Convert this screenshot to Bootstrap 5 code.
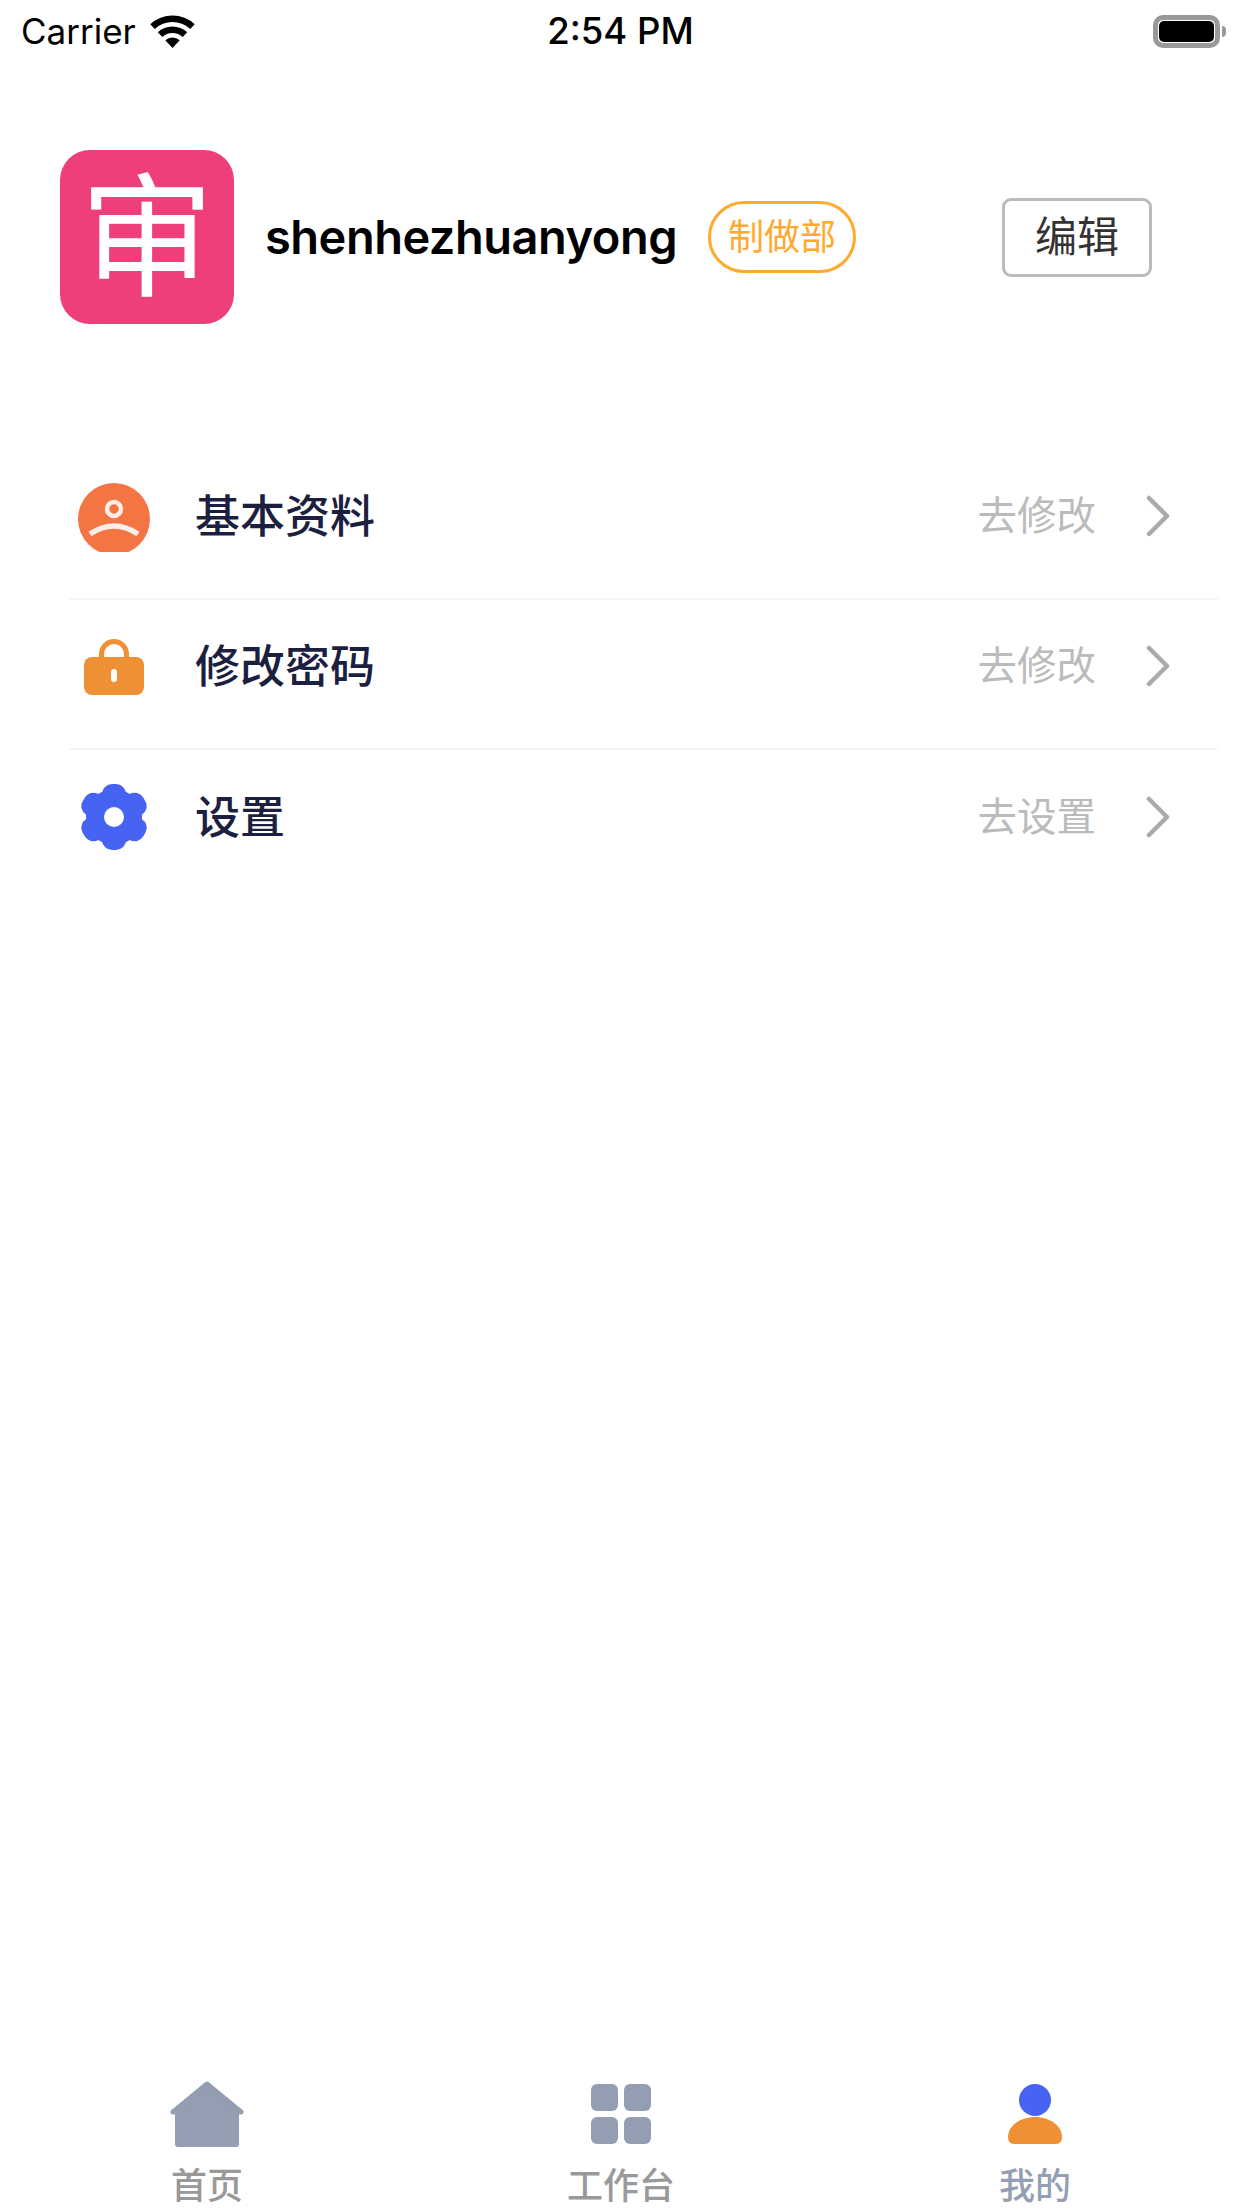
<!DOCTYPE html>
<html lang="zh-CN">
<head>
  <meta charset="UTF-8">
  <title>我的</title>
  <meta name="viewport" content="width=device-width, initial-scale=1">
  <link href="https://cdn.jsdelivr.net/npm/bootstrap@5.3.0/dist/css/bootstrap.min.css" rel="stylesheet">
  <style>
    body {
      background: #fff;
      font-family: Inter, "Noto Sans CJK SC", sans-serif;
      height: 100vh;
    }
    .status-bar { height: 62px; padding: 0 16px 0 21px; font-size: 35px; color: #000; }
    .status-time { font-weight: 500; font-size: 36.5px; margin-right: 6px; }
    .status-side { width: 306px; }
    .wifi-icon { margin-left: 14px; }
    .battery { width: 67px; height: 33px; border: 5px solid #999; border-radius: 10px; padding: 1px; }
    .battery-fill { background: #000; border-radius: 5px; height: 100%; }
    .battery-nub { width: 4px; height: 11px; background: #999; border-radius: 0 4px 4px 0; margin-left: 2px; }

    .profile { margin-top: 88px; padding: 0 90px 0 60px; }
    .avatar { width: 174px; height: 174px; border-radius: 30px; background: #ef3f7b; color: #fff; font-size: 134px; line-height: 1; font-weight: 400; }
    .user-name { font-size: 47px; font-weight: 600; color: #000; margin-left: 31px; letter-spacing: -.5px; }
    .dept-tag { width: 148px; height: 72px; margin-left: 31px; border: 3px solid #ffa92e; border-radius: 36px; color: #ffa92e; font-size: 36px; }
    .edit-btn { width: 150px; height: 79px; padding: 0; border: 3px solid #bbb; border-radius: 9px; color: #333; font-size: 42px; line-height: 1; }

    .menu-list { margin: 126px 24px 0 69px; --bs-list-group-border-color: #f5f5f5; --bs-list-group-border-width: 2px; --bs-list-group-bg: transparent; }
    .menu-row { height: 150px; padding: 0 48px 14px 0; }
    .menu-icon { width: 90px; }
    .menu-icon-up { margin-bottom: 2px; }
    .menu-label { margin-left: 36px; font-size: 45px; font-weight: 500; color: #1c1f40; }
    .menu-hint { font-size: 39.5px; color: #bbb; margin-right: 50px; }
    .menu-arrow { margin-bottom: 2px; }

    .tabs { height: 127px; }
    .tab-icon { height: 66px; margin-bottom: 21px; }
    .tab-label { font-size: 36px; line-height: 36px; font-weight: 500; color: #999; white-space: nowrap; }
    .tab-label-on { color: #949fb4; }
  </style>
</head>
<body class="d-flex flex-column">

<!-- status bar -->
<div class="status-bar d-flex align-items-center justify-content-between">
  <div class="status-side d-flex align-items-center">
    <span>Carrier</span>
    <svg class="wifi-icon" width="45" height="33" viewBox="0 0 45 33"><path d="M0.3 9.2A32.5 32.5 0 0 1 44.7 9.2L40.2 14A26 26 0 0 0 4.8 14Z M7.8 17.3A21.5 21.5 0 0 1 37.2 17.3L32.7 22A15 15 0 0 0 12.3 22Z M15.3 25.3A10.500 10.500 0 0 1 29.7 25.3L22.5 33Z"/></svg>
  </div>
  <span class="status-time">2:54 PM</span>
  <div class="status-side d-flex align-items-center justify-content-end">
    <div class="battery"><div class="battery-fill"></div></div>
    <div class="battery-nub"></div>
  </div>
</div>

<!-- profile -->
<div class="profile d-flex align-items-center">
  <div class="avatar d-flex align-items-center justify-content-center">审</div>
  <span class="user-name">shenhezhuanyong</span>
  <span class="dept-tag d-flex align-items-center justify-content-center">制做部</span>
  <button type="button" class="btn edit-btn ms-auto">编辑</button>
</div>

<!-- menu -->
<div class="list-group list-group-flush menu-list">
  <div class="list-group-item menu-row d-flex align-items-center">
    <div class="menu-icon d-flex justify-content-center">
      <svg width="72" height="69" viewBox="0 0 72 69"><circle cx="36" cy="36" r="36" fill="#f27543"/><circle cx="36" cy="26" r="7" fill="none" stroke="#fdeee8" stroke-width="4.5"/><path d="M12 51Q36 35 60 51" fill="none" stroke="#fdeee8" stroke-width="5.5"/></svg>
    </div>
    <span class="menu-label">基本资料</span>
    <span class="menu-hint ms-auto">去修改</span>
    <svg class="menu-arrow" width="24" height="42" viewBox="0 0 24 42"><path d="M3 3L21 21L3 39" fill="none" stroke="#aaa" stroke-width="4.5" stroke-linecap="round" stroke-linejoin="round"/></svg>
  </div>
  <div class="list-group-item menu-row d-flex align-items-center">
    <div class="menu-icon d-flex justify-content-center">
      <svg width="60" height="56" viewBox="0 0 60 56"><path d="M17.5 22V15a12.500 12.500 0 0 1 25 0V22" fill="none" stroke="#f09035" stroke-width="5"/><rect y="18" width="60" height="38" rx="8" fill="#f09035"/><rect x="27" y="30" width="6" height="13" rx="3" fill="#fff"/></svg>
    </div>
    <span class="menu-label">修改密码</span>
    <span class="menu-hint ms-auto">去修改</span>
    <svg class="menu-arrow" width="24" height="42" viewBox="0 0 24 42"><path d="M3 3L21 21L3 39" fill="none" stroke="#aaa" stroke-width="4.5" stroke-linecap="round" stroke-linejoin="round"/></svg>
  </div>
  <div class="list-group-item menu-row d-flex align-items-center">
    <div class="menu-icon menu-icon-up d-flex justify-content-center">
      <svg width="66" height="66" viewBox="-33 -33 66 66"><g fill="#4663f2"><circle r="28"/><rect x="-12" y="-33" width="24" height="66" rx="10"/><rect x="-12" y="-35" width="24" height="70" rx="10" transform="rotate(60)"/><rect x="-12" y="-35" width="24" height="70" rx="10" transform="rotate(120)"/></g><circle r="10" fill="#fff"/></svg>
    </div>
    <span class="menu-label">设置</span>
    <span class="menu-hint ms-auto">去设置</span>
    <svg class="menu-arrow" width="24" height="42" viewBox="0 0 24 42"><path d="M3 3L21 21L3 39" fill="none" stroke="#aaa" stroke-width="4.5" stroke-linecap="round" stroke-linejoin="round"/></svg>
  </div>
</div>

<!-- tab bar -->
<div class="tabs row g-0 mt-auto">
  <div class="col-4 d-flex flex-column align-items-center">
    <div class="tab-icon d-flex align-items-center">
      <svg width="74" height="66" viewBox="0 0 74 66"><path d="M37 3L71 31H3Z" fill="#939eb2" stroke="#939eb2" stroke-width="5" stroke-linejoin="round"/><rect x="5" y="30" width="64" height="36" rx="3" fill="#939eb2"/></svg>
    </div>
    <span class="tab-label">首页</span>
  </div>
  <div class="col-4 d-flex flex-column align-items-center">
    <div class="tab-icon d-flex align-items-center">
      <svg width="60" height="60" viewBox="0 0 60 60"><g fill="#939eb2"><rect width="27" height="27" rx="6"/><rect x="33" width="27" height="27" rx="6"/><rect y="33" width="27" height="27" rx="6"/><rect x="33" y="33" width="27" height="27" rx="6"/></g></svg>
    </div>
    <span class="tab-label">工作台</span>
  </div>
  <div class="col-4 d-flex flex-column align-items-center">
    <div class="tab-icon d-flex align-items-center">
      <svg width="54" height="60" viewBox="0 0 54 60"><circle cx="27" cy="16" r="16" fill="#4663f2"/><path d="M0 53C0 42 12 33 27 33S54 42 54 53Q54 60 48 60H6Q0 60 0 53Z" fill="#f09035"/></svg>
    </div>
    <span class="tab-label tab-label-on">我的</span>
  </div>
</div>

<script src="https://cdn.jsdelivr.net/npm/bootstrap@5.3.0/dist/js/bootstrap.bundle.min.js"></script>
</body>
</html>
